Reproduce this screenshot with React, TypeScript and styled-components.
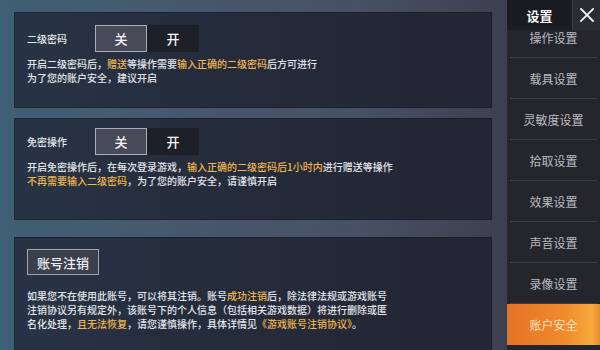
import styled, { createGlobalStyle } from "styled-components"

const GlobalStyle = createGlobalStyle`
  html, body {
    margin: 0;
    padding: 0;
    background: #2c3a4a;
  }
  body {
    font-family: "Noto Sans CJK SC", "Noto Sans", sans-serif;
  }
`

type Segment = { text: string; hl?: boolean }

const menuItems = ["操作设置", "载具设置", "灵敏度设置", "拾取设置", "效果设置", "声音设置", "录像设置", "账户安全"]

const secondPasswordText: Segment[][] = [
  [
    { text: "开启二级密码后，" },
    { text: "赠送", hl: true },
    { text: "等操作需要" },
    { text: "输入正确的二级密码", hl: true },
    { text: "后方可进行" },
  ],
  [{ text: "为了您的账户安全，建议开启" }],
]

const noPasswordText: Segment[][] = [
  [
    { text: "开启免密操作后，在每次登录游戏，" },
    { text: "输入正确的二级密码后1小时内", hl: true },
    { text: "进行赠送等操作" },
  ],
  [{ text: "不再需要输入二级密码", hl: true }, { text: "，为了您的账户安全，请谨慎开启" }],
]

const cancelText: Segment[][] = [
  [
    { text: "如果您不在使用此账号，可以将其注销。账号" },
    { text: "成功注销", hl: true },
    { text: "后，除法律法规或游戏账号" },
  ],
  [{ text: "注销协议另有规定外，该账号下的个人信息（包括相关游戏数据）将进行删除或匿" }],
  [
    { text: "名化处理，" },
    { text: "且无法恢复", hl: true },
    { text: "，请您谨慎操作，具体详情见" },
    { text: "《游戏账号注销协议》", hl: true },
    { text: "。" },
  ],
]

const Description = ({ lines }: { lines: Segment[][] }) => (
  <Desc>
    {lines.map((line, i) => (
      <div key={i}>
        {line.map((seg, j) => (seg.hl ? <Hl key={j}>{seg.text}</Hl> : <span key={j}>{seg.text}</span>))}
      </div>
    ))}
  </Desc>
)

const Toggle = () => (
  <ToggleGroup>
    <ToggleOption $active>关</ToggleOption>
    <ToggleOption>开</ToggleOption>
  </ToggleGroup>
)

export default function App() {
  return (
    <Root>
      <GlobalStyle />
      <Main>
        <Panel $height={96} $pad={13}>
          <SettingRow>
            <Label>二级密码</Label>
            <Toggle />
          </SettingRow>
          <Description lines={secondPasswordText} />
        </Panel>
        <Panel $height={102} $pad={10} $gap={10}>
          <SettingRow>
            <Label>免密操作</Label>
            <Toggle />
          </SettingRow>
          <Description lines={noPasswordText} />
        </Panel>
        <Panel $height={116} $pad={12} $gap={17}>
          <CancelButton>账号注销</CancelButton>
          <Description lines={cancelText} />
        </Panel>
      </Main>
      <Sidebar>
        <SideHeader>
          <HeaderTitle>设置</HeaderTitle>
          <CloseButton aria-label="close">
            <svg width="16" height="16" viewBox="0 0 16 16">
              <path d="M2 2 L14 14 M14 2 L2 14" stroke="#f2f2f2" strokeWidth="1.8" strokeLinecap="square" />
            </svg>
          </CloseButton>
        </SideHeader>
        <MenuList>
          {menuItems.map((item, i) => (
            <MenuItem key={item} $active={i === menuItems.length - 1}>
              {item}
            </MenuItem>
          ))}
        </MenuList>
      </Sidebar>
    </Root>
  )
}

const Root = styled.div`
  width: 600px;
  height: 350px;
  overflow: hidden;
  display: flex;
  background: linear-gradient(90deg, #3f6076 0%, #46596e 25%, #475064 60%, #3c3f4e 85%, #2d2f38 100%);
`

const Main = styled.div`
  width: 493px;
  padding: 12px 0 0 14px;
  box-sizing: border-box;
  display: flex;
  flex-direction: column;
`

const Panel = styled.section<{ $height: number; $pad: number; $gap?: number }>`
  width: 478px;
  height: ${(p) => p.$height}px;
  flex-shrink: 0;
  margin-top: ${(p) => p.$gap ?? 0}px;
  padding: ${(p) => p.$pad}px 0 0 13px;
  box-sizing: border-box;
  background: linear-gradient(90deg, #283445 0%, #252c3b 40%, #232633 100%);
  box-shadow: inset 0 0 0 1px rgba(20, 24, 32, 0.5);
`

const SettingRow = styled.div`
  display: flex;
  align-items: center;
  margin-bottom: 5px;
`

const Label = styled.div`
  width: 68px;
  font-size: 10px;
  font-weight: 500;
  color: #e6e9ee;
`

const ToggleGroup = styled.div`
  display: flex;
`

const ToggleOption = styled.div<{ $active?: boolean }>`
  width: 52px;
  height: 27px;
  box-sizing: border-box;
  display: flex;
  align-items: center;
  justify-content: center;
  font-size: 13px;
  font-weight: 500;
  color: #f4f4f4;
  background: ${(p) => (p.$active ? "#484a5a" : "#1d2029")};
  border: 1px solid ${(p) => (p.$active ? "#a9adb8" : "transparent")};
`

const Desc = styled.div`
  font-size: 10px;
  font-weight: 500;
  line-height: 14px;
  color: #e2e5ea;
  white-space: nowrap;
`

const Hl = styled.span`
  color: #efb54e;
`

const CancelButton = styled.div`
  width: 72px;
  height: 26px;
  box-sizing: border-box;
  display: flex;
  align-items: center;
  justify-content: center;
  font-size: 13px;
  font-weight: 500;
  color: #eceef2;
  background: #3b404d;
  border: 1px solid #9ea3ae;
  margin-bottom: 14px;
`

const Sidebar = styled.aside`
  position: relative;
  margin-left: 14px;
  width: 93px;
  height: 350px;
  background: #25262c;
`

const SideHeader = styled.div`
  position: absolute;
  top: 0;
  left: 0;
  right: 0;
  height: 30px;
  display: flex;
  z-index: 2;
`

const HeaderTitle = styled.div`
  width: 65px;
  display: flex;
  align-items: center;
  justify-content: center;
  background: #1b1c21;
  color: #f5f5f5;
  font-size: 13px;
  font-weight: 600;
`

const CloseButton = styled.div`
  flex: 1;
  display: flex;
  align-items: center;
  justify-content: center;
  background: #2a2c33;
  border-left: 1px solid #3a3c44;
`

const MenuList = styled.div`
  padding-top: 17px;
  display: flex;
  flex-direction: column;
`

const MenuItem = styled.div<{ $active?: boolean }>`
  height: 41px;
  margin: 0 ${(p) => (p.$active ? 0 : 3)}px;
  display: flex;
  align-items: center;
  justify-content: center;
  font-size: 12px;
  color: ${(p) => (p.$active ? "#fbe1c6" : "#b9bbc0")};
  border-bottom: 1px solid ${(p) => (p.$active ? "transparent" : "#3c3e45")};
  background: ${(p) => (p.$active ? "linear-gradient(90deg, #e57326 0%, #ef8a2c 60%, #f7a93a 92%, #e98c30 100%)" : "transparent")};
  box-sizing: border-box;
`
